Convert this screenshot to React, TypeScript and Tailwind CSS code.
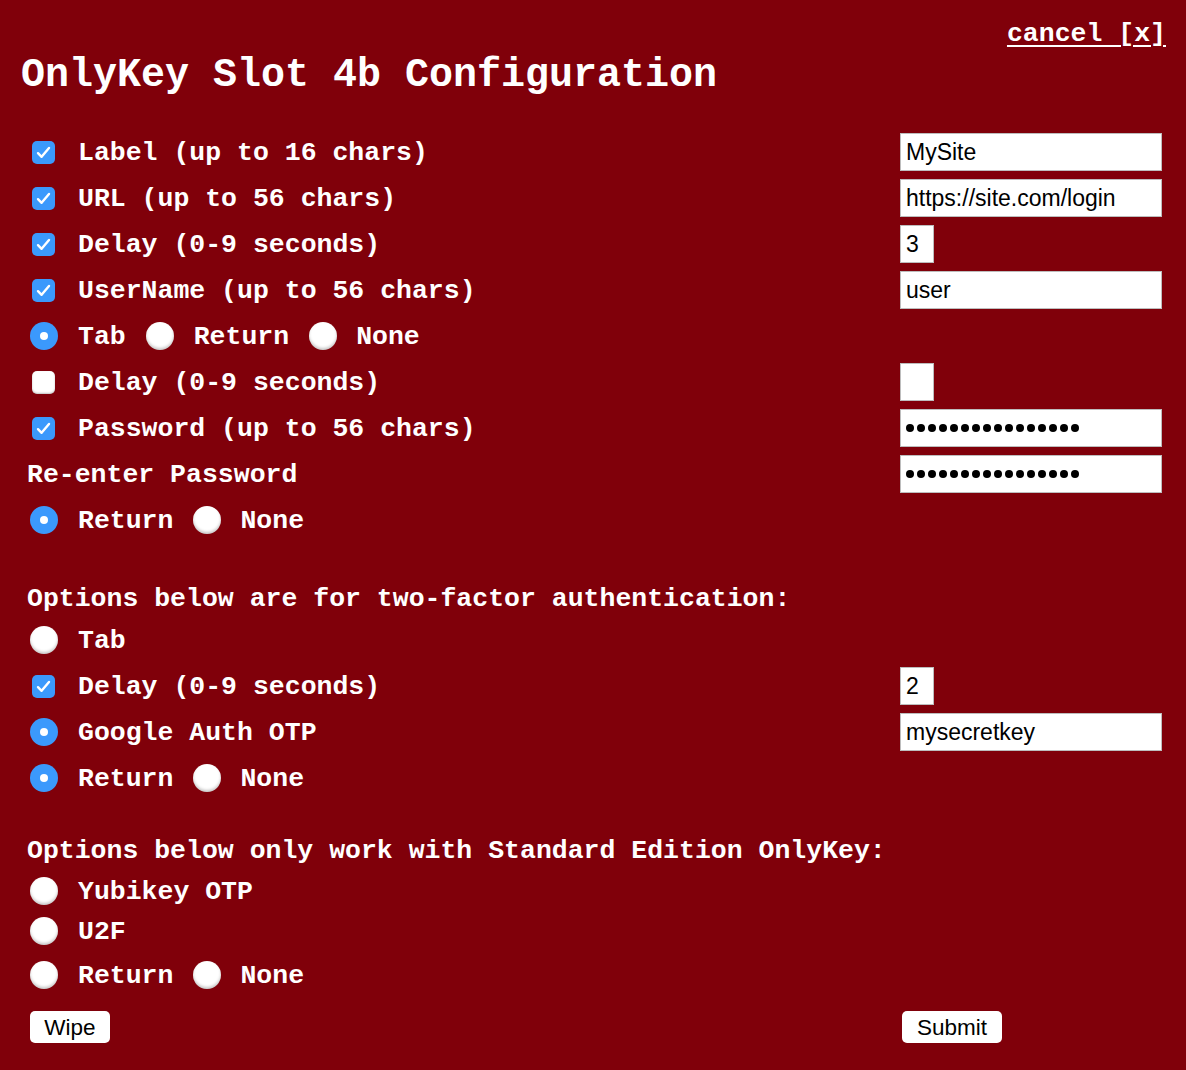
import React from "react";

const mono = { fontFamily: '"Liberation Mono", "Courier New", monospace' };
const sans = { fontFamily: '"Liberation Sans", Arial, sans-serif' };

function Check({ on }: { on: boolean }) {
  return on ? (
    <span className="ml-[32px] mr-[23px] flex h-[23px] w-[23px] shrink-0 items-center justify-center rounded-[5px] bg-[#3b99fc]">
      <svg width="15" height="13" viewBox="0 0 15 13">
        <path d="M2 7.2 L5.6 10.8 L13 2" fill="none" stroke="white" strokeWidth="2.4" strokeLinecap="round" strokeLinejoin="round" />
      </svg>
    </span>
  ) : (
    <span className="ml-[32px] mr-[23px] h-[23px] w-[23px] shrink-0 rounded-[5px] bg-white shadow-[inset_0_-1px_2px_rgba(0,0,0,0.25)]" />
  );
}

function Radio({ on, cls = "" }: { on: boolean; cls?: string }) {
  return on ? (
    <span className={`flex h-[28px] w-[28px] shrink-0 items-center justify-center rounded-full bg-[#3b99fc] ${cls}`}>
      <span className="h-[8px] w-[8px] rounded-full bg-white" />
    </span>
  ) : (
    <span className={`h-[28px] w-[28px] shrink-0 rounded-full bg-white shadow-[inset_0_-2px_3px_rgba(0,0,0,0.22)] ${cls}`} />
  );
}

function Field({ value, w = "w-[262px]" }: { value?: string; w?: string }) {
  return (
    <div
      className={`flex h-[38px] ${w} items-center border border-[#bdbdbd] bg-white pl-[5px] pt-[1px] text-[23px] font-normal text-black`}
      style={sans}
    >
      {value}
    </div>
  );
}

function Dots() {
  return (
    <div className="flex h-[38px] w-[262px] items-center gap-[3px] border border-[#bdbdbd] bg-white pl-[5px]">
      {Array.from({ length: 16 }).map((_, i) => (
        <span key={i} className="h-[8px] w-[8px] rounded-full bg-black" />
      ))}
    </div>
  );
}

function Row({ h = "h-[46px]", children, right }: { h?: string; children: React.ReactNode; right?: React.ReactNode }) {
  return (
    <div className={`flex ${h} items-center pr-[24px]`}>
      <div className="flex flex-1 items-center">{children}</div>
      <div className="flex w-[262px] items-center">{right}</div>
    </div>
  );
}

function T({ children }: { children: React.ReactNode }) {
  return <span className="whitespace-pre pt-[4px]">{children}</span>;
}

export default function App() {
  return (
    <div className="min-h-[1070px] w-full bg-[#80000a] pt-[18px] text-white" style={mono}>
      <div className="text-[26.5px] font-bold">
        <div className="flex h-[30px] items-center justify-end pr-[20px] pt-[2px] leading-none">
          <span className="underline underline-offset-[4px] decoration-2 whitespace-pre">cancel [x]</span>
        </div>
        <h1 className="mt-[1px] flex h-[48px] items-center pl-[21px] pt-[5px] text-[40px] leading-none">
          <span className="whitespace-pre">OnlyKey Slot 4b Configuration</span>
        </h1>

        <div className="mt-[32px]">
          <Row right={<Field value="MySite" />}>
            <Check on />
            <T>Label (up to 16 chars)</T>
          </Row>
          <Row right={<Field value="https://site.com/login" />}>
            <Check on />
            <T>URL (up to 56 chars)</T>
          </Row>
          <Row right={<Field value="3" w="w-[34px]" />}>
            <Check on />
            <T>Delay (0-9 seconds)</T>
          </Row>
          <Row right={<Field value="user" />}>
            <Check on />
            <T>UserName (up to 56 chars)</T>
          </Row>
          <Row>
            <Radio on cls="ml-[30px] mr-[20px]" />
            <T>Tab</T>
            <Radio on={false} cls="ml-[20px] mr-[20px]" />
            <T>Return</T>
            <Radio on={false} cls="ml-[20px] mr-[19px]" />
            <T>None</T>
          </Row>
          <Row right={<Field w="w-[34px]" />}>
            <Check on={false} />
            <T>Delay (0-9 seconds)</T>
          </Row>
          <Row right={<Dots />}>
            <Check on />
            <T>Password (up to 56 chars)</T>
          </Row>
          <Row right={<Dots />}>
            <span className="whitespace-pre pl-[27px] pt-[4px]">Re-enter Password</span>
          </Row>
          <Row>
            <Radio on cls="ml-[30px] mr-[20px]" />
            <T>Return</T>
            <Radio on={false} cls="ml-[20px] mr-[19px]" />
            <T>None</T>
          </Row>

          <div className="mt-[36px] flex h-[38px] items-center pl-[27px]">
            <T>Options below are for two-factor authentication:</T>
          </div>
          <Row>
            <Radio on={false} cls="ml-[30px] mr-[20px]" />
            <T>Tab</T>
          </Row>
          <Row right={<Field value="2" w="w-[34px]" />}>
            <Check on />
            <T>Delay (0-9 seconds)</T>
          </Row>
          <Row right={<Field value="mysecretkey" />}>
            <Radio on cls="ml-[30px] mr-[20px]" />
            <T>Google Auth OTP</T>
          </Row>
          <Row>
            <Radio on cls="ml-[30px] mr-[20px]" />
            <T>Return</T>
            <Radio on={false} cls="ml-[20px] mr-[19px]" />
            <T>None</T>
          </Row>

          <div className="mt-[30px] flex h-[38px] items-center pl-[27px]">
            <T>Options below only work with Standard Edition OnlyKey:</T>
          </div>
          <Row h="h-[44px]">
            <Radio on={false} cls="ml-[30px] mr-[20px]" />
            <T>Yubikey OTP</T>
          </Row>
          <Row h="h-[36px]">
            <Radio on={false} cls="ml-[30px] mr-[20px]" />
            <T>U2F</T>
          </Row>
          <Row h="h-[52px]">
            <Radio on={false} cls="ml-[30px] mr-[20px]" />
            <T>Return</T>
            <Radio on={false} cls="ml-[20px] mr-[19px]" />
            <T>None</T>
          </Row>

          <div className="mt-[10px] flex items-center pr-[24px] pb-[27px]">
            <div className="flex-1 pl-[30px]">
              <button
                className="flex h-[32px] w-[80px] items-center justify-center rounded-[5px] bg-white pt-[1px] text-[22.5px] font-normal text-black"
                style={sans}
              >
                Wipe
              </button>
            </div>
            <div className="w-[262px] pl-[2px]">
              <button
                className="flex h-[32px] w-[100px] items-center justify-center rounded-[5px] bg-white pt-[1px] text-[22.5px] font-normal text-black"
                style={sans}
              >
                Submit
              </button>
            </div>
          </div>
        </div>
      </div>
    </div>
  );
}
